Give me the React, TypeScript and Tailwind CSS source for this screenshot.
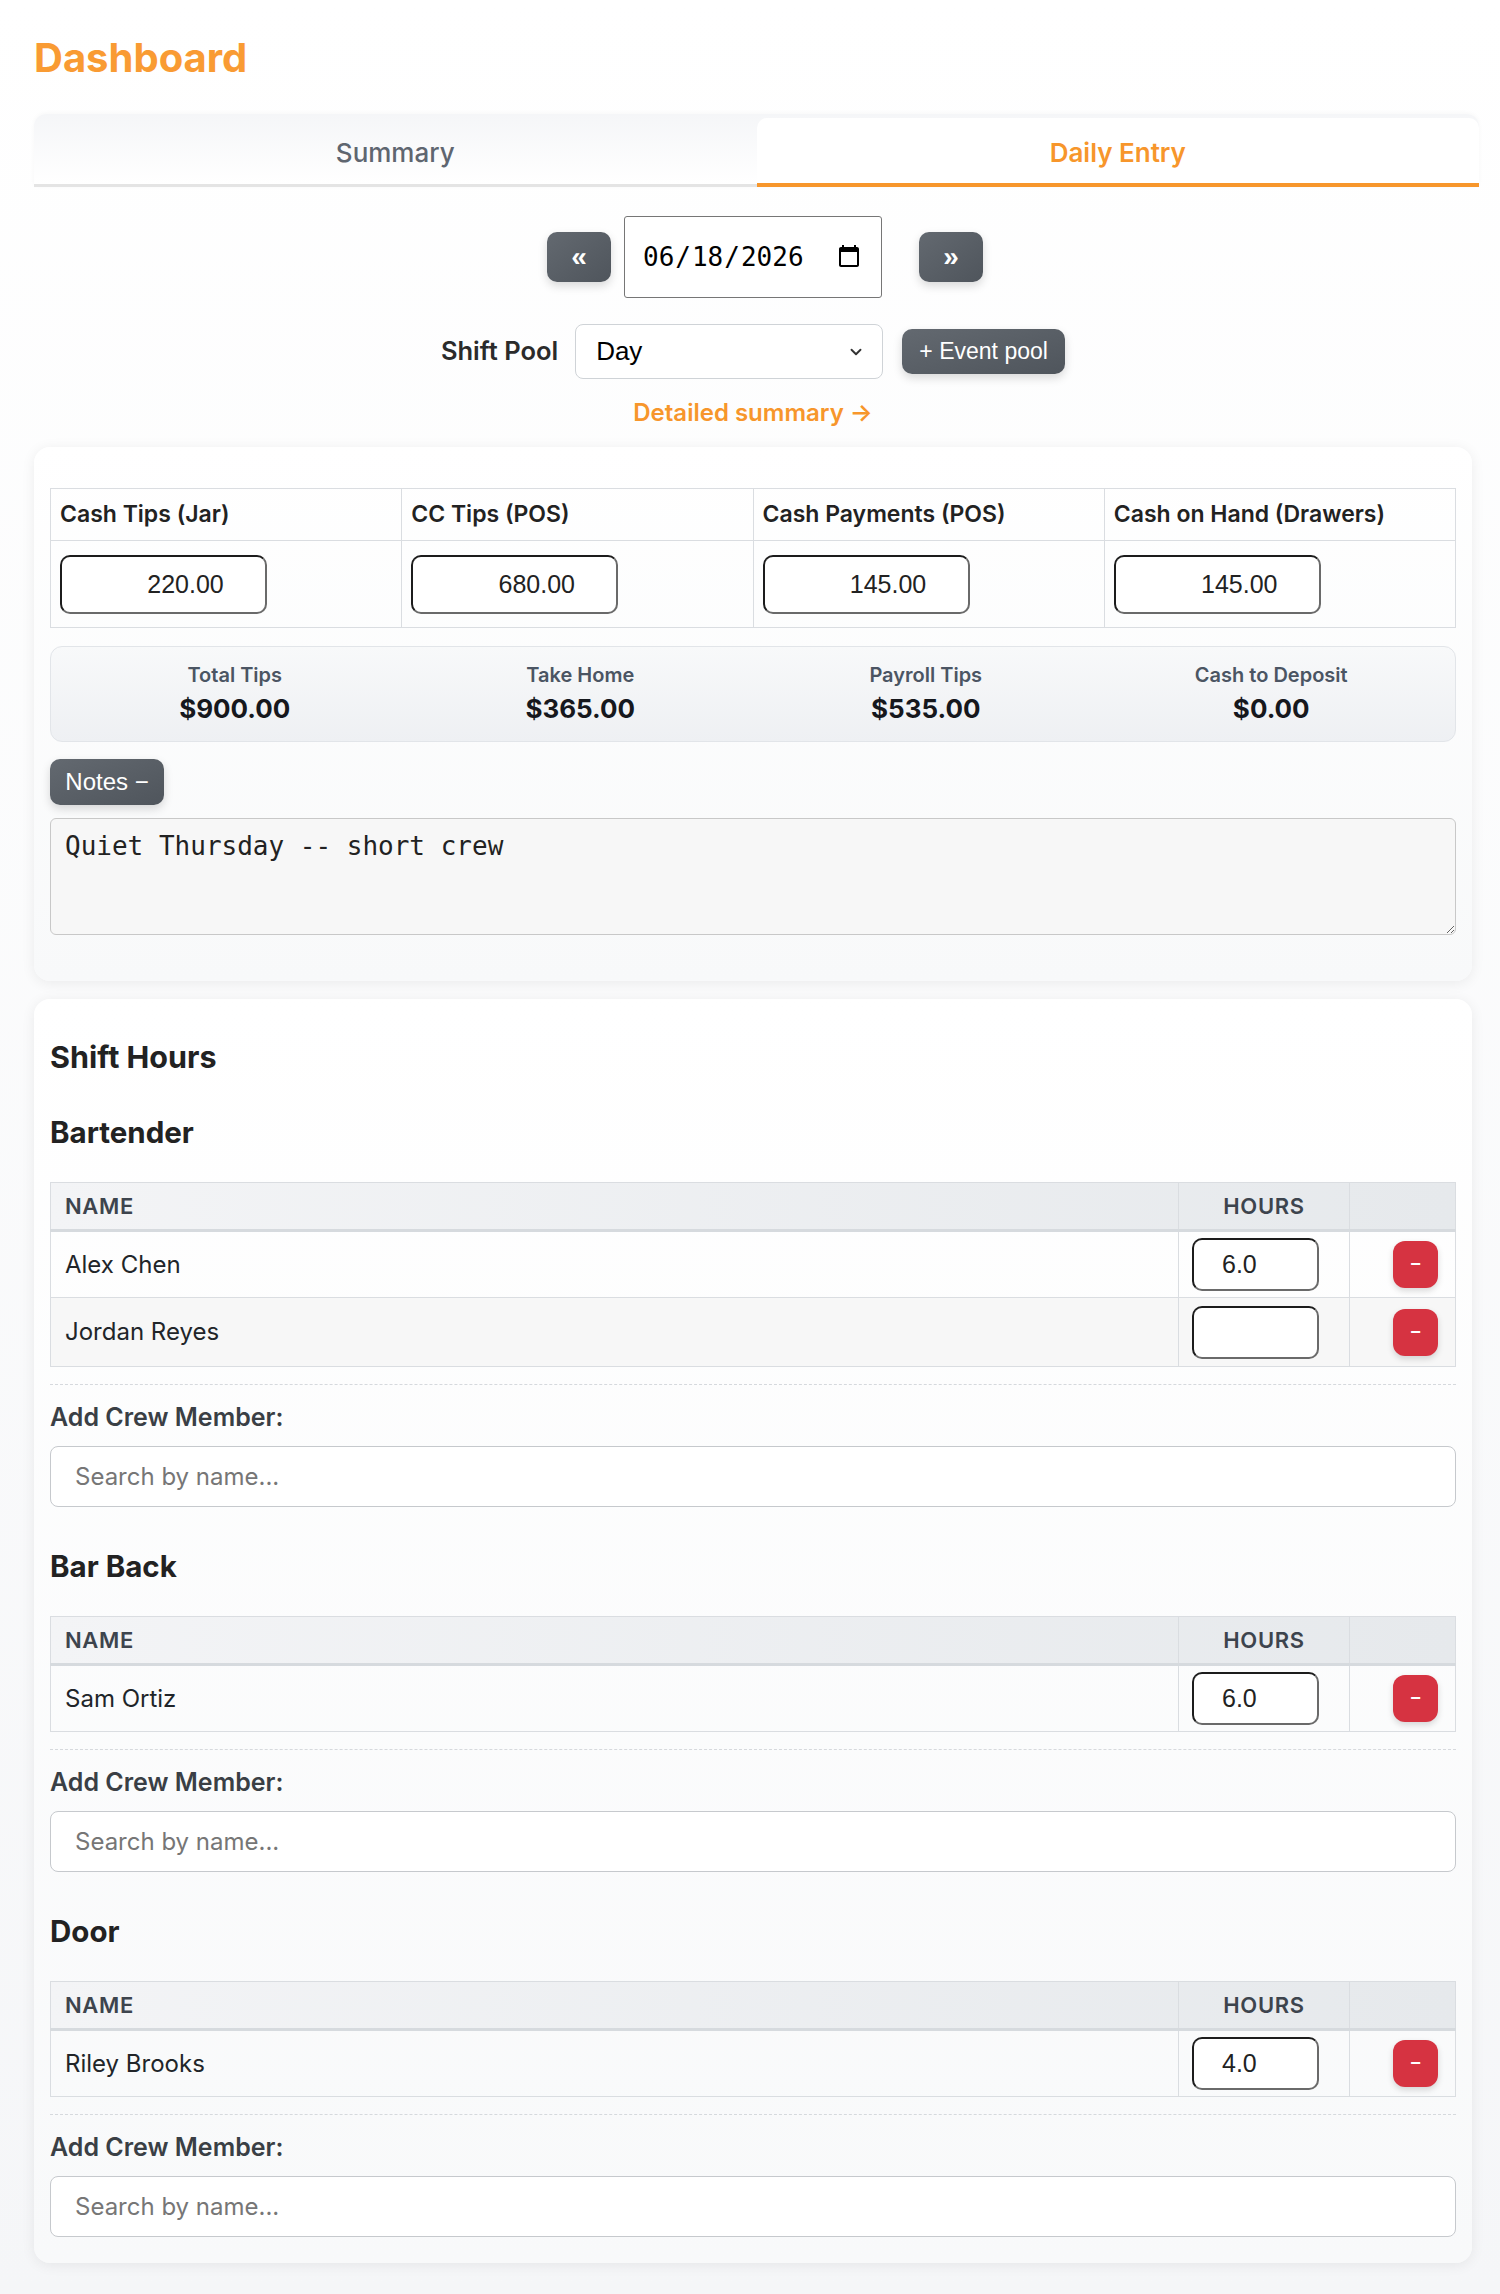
import React from 'react';
import { ChevronDown } from 'lucide-react';

type Crew = { name: string; hours: string };

const roles: { title: string; crew: Crew[] }[] = [
  { title: 'Bartender', crew: [{ name: 'Alex Chen', hours: '6.0' }, { name: 'Jordan Reyes', hours: '' }] },
  { title: 'Bar Back', crew: [{ name: 'Sam Ortiz', hours: '6.0' }] },
  { title: 'Door', crew: [{ name: 'Riley Brooks', hours: '4.0' }] },
];

const entries = [
  { label: 'Cash Tips (Jar)', value: '220.00' },
  { label: 'CC Tips (POS)', value: '680.00' },
  { label: 'Cash Payments (POS)', value: '145.00' },
  { label: 'Cash on Hand (Drawers)', value: '145.00' },
];

const totals = [
  { label: 'Total Tips', value: '$900.00' },
  { label: 'Take Home', value: '$365.00' },
  { label: 'Payroll Tips', value: '$535.00' },
  { label: 'Cash to Deposit', value: '$0.00' },
];

function RoleSection({ title, crew, first }: { title: string; crew: Crew[]; first?: boolean }) {
  return (
    <section className={first ? 'mt-[40px]' : 'mt-[42px]'}>
      <h3 className="text-[29.5px] leading-[34px] font-bold text-[#222]">{title}</h3>

      <table className="mt-[33px] w-full table-fixed border-collapse border border-[#dadde1]">
        <colgroup>
          <col />
          <col className="w-[171px]" />
          <col className="w-[106px]" />
        </colgroup>
        <thead>
          <tr className="bg-gradient-to-r from-[#f3f4f6] to-[#e6e9ec]">
            <th className="h-[48px] border border-b-[3px] border-[#dadde1] border-b-[#d6dade] pl-[14px] text-left text-[22px] font-semibold uppercase tracking-[0.03em] text-[#3d444d]">
              Name
            </th>
            <th className="border border-b-[3px] border-[#dadde1] border-b-[#d6dade] text-center text-[22px] font-semibold uppercase tracking-[0.03em] text-[#3d444d]">
              Hours
            </th>
            <th className="border border-b-[3px] border-[#dadde1] border-b-[#d6dade]" />
          </tr>
        </thead>
        <tbody>
          {crew.map((c, i) => (
            <tr key={c.name} className={i % 2 === 1 ? 'bg-[#f7f7f7]' : ''}>
              <td className={`${i === 1 ? 'h-[69px]' : 'h-[67px]'} border border-[#dadde1] pl-[14px] text-[24px] text-[#212529]`}>
                {c.name}
              </td>
              <td className="border border-[#dadde1] pl-[13px]">
                <input
                  type="text"
                  defaultValue={c.hours}
                  className="block h-[53px] w-[127px] rounded-[10px] border-2 border-t-[#1c1c1c] border-l-[#1c1c1c] border-b-[#6a6a6a] border-r-[#6a6a6a] bg-white pl-[28px] font-['Liberation_Sans',Arial,sans-serif] text-[25px] text-[#222] outline-none"
                />
              </td>
              <td className="border border-[#dadde1] pr-[17px]">
                <div className="flex justify-end">
                  <button className="flex h-[47px] w-[45px] items-center justify-center rounded-[12px] bg-[#d63341] font-['Liberation_Sans',Arial,sans-serif] text-[18px] font-bold text-white shadow-[0_3px_6px_rgba(0,0,0,0.15)]">
                    −
                  </button>
                </div>
              </td>
            </tr>
          ))}
        </tbody>
      </table>

      <div className="mt-[17px] border-t border-dashed border-[#d6d9dd]" />
      <p className="mt-[18px] text-[25px] leading-[29px] font-semibold text-[#3a3f45]">Add Crew Member:</p>
      <input
        type="text"
        placeholder="Search by name..."
        className="mt-[14px] block h-[61px] w-full rounded-[8px] border-[1.5px] border-[#c6c9cd] bg-white pl-[24px] text-[24px] text-[#222] placeholder:text-[#767676] outline-none"
      />
    </section>
  );
}

export default function App() {
  return (
    <div className="min-h-screen bg-gradient-to-b from-white to-[#f5f6f8] pt-[34px] pb-[32px] pl-[34px] pr-[28px] font-['Inter',sans-serif] text-[#212529]">
      <h1 className="text-[40px] leading-[48px] font-bold text-[#f99b33]">Dashboard</h1>

      {/* Tabs */}
      <div className="-mr-[7px] mt-[32px] flex h-[73px] rounded-t-[12px] border-b-[3px] border-[#e4e4e4] bg-gradient-to-b from-[#f5f6f8] to-white shadow-[0_-1px_4px_rgba(0,0,0,0.03)]">
        <button className="flex flex-1 items-center justify-center pt-[6px] text-[26px] font-medium text-[#5f6670]">Summary</button>
        <button className="mt-[4px] flex h-[69px] flex-1 items-center justify-center self-start rounded-t-[10px] border-b-[4px] border-[#f7962b] bg-white pt-[3px] text-[26px] font-semibold text-[#f7962b]">
          Daily Entry
        </button>
      </div>

      {/* Date nav */}
      <div className="mt-[29px] flex items-center justify-center pl-[24px]">
        <button className="mr-[13px] flex h-[50px] w-[64px] items-center justify-center rounded-[10px] bg-gradient-to-br from-[#636970] to-[#4f555c] font-['Liberation_Sans',Arial,sans-serif] text-[28px] font-bold text-white shadow-[0_4px_10px_rgba(0,0,0,0.15)]">
          «
        </button>
        <input
          type="date"
          defaultValue="2026-06-18"
          className="h-[82px] w-[258px] rounded-[3px] border border-[#767676] bg-white px-[17px] font-['DejaVu_Sans_Mono',monospace] text-[26px] text-black outline-none"
        />
        <button className="ml-[37px] flex h-[50px] w-[64px] items-center justify-center rounded-[10px] bg-gradient-to-br from-[#636970] to-[#4f555c] font-['Liberation_Sans',Arial,sans-serif] text-[28px] font-bold text-white shadow-[0_4px_10px_rgba(0,0,0,0.15)]">
          »
        </button>
      </div>

      {/* Shift pool */}
      <div className="mt-[26px] flex items-center justify-center">
        <span className="mr-[17px] text-[25.5px] font-semibold text-[#2b2b2b]">Shift Pool</span>
        <div className="relative h-[55px] w-[308px]">
          <select
            defaultValue="Day"
            className="h-full w-full appearance-none rounded-[8px] border border-[#cfd3d7] bg-white pl-[20px] font-['Liberation_Sans',Arial,sans-serif] text-[26px] text-black outline-none"
          >
            <option>Day</option>
            <option>Night</option>
          </select>
          <ChevronDown className="pointer-events-none absolute right-[18px] top-[19px] h-[18px] w-[18px] text-[#333]" strokeWidth={2.5} />
        </div>
        <button className="ml-[19px] h-[45px] w-[163px] rounded-[10px] bg-gradient-to-br from-[#636970] to-[#4f555c] font-['Liberation_Sans',Arial,sans-serif] text-[23px] text-white shadow-[0_4px_10px_rgba(0,0,0,0.15)]">
          + Event pool
        </button>
      </div>

      <div className="mt-[19px] text-center">
        <a className="text-[24px] leading-[29px] font-semibold text-[#f7962b]">Detailed summary →</a>
      </div>

      {/* Entry card */}
      <div className="mt-[20px] rounded-[16px] bg-gradient-to-b from-white to-[#f8f9fa] px-[16px] pt-[41px] pb-[46px] shadow-[0_2px_14px_rgba(0,0,0,0.07)]">
        <table className="w-full table-fixed border-collapse border border-[#dadde1]">
          <thead>
            <tr>
              {entries.map(e => (
                <th key={e.label} className="h-[52px] border border-[#dadde1] px-[9px] text-left text-[23px] font-semibold text-[#222]">
                  {e.label}
                </th>
              ))}
            </tr>
          </thead>
          <tbody>
            <tr>
              {entries.map(e => (
                <td key={e.label} className="h-[87px] border border-[#dadde1] px-[9px]">
                  <input
                    type="text"
                    defaultValue={e.value}
                    className="block h-[59px] w-[207px] rounded-[10px] border-2 border-t-[#1c1c1c] border-l-[#1c1c1c] border-b-[#6a6a6a] border-r-[#6a6a6a] bg-white pl-[44px] text-center font-['Liberation_Sans',Arial,sans-serif] text-[25px] text-[#222] outline-none"
                  />
                </td>
              ))}
            </tr>
          </tbody>
        </table>

        <div className="mt-[18px] grid h-[96px] grid-cols-4 items-center rounded-[12px] border border-[#e2e5e9] bg-gradient-to-b from-[#f8f9fa] to-[#eef0f3] px-[11px]">
          {totals.map(t => (
            <div key={t.label} className="flex flex-col items-center">
              <span className="text-[20px] leading-[24px] font-semibold text-[#4b5563]">{t.label}</span>
              <span className="mt-[5px] text-[26px] leading-[34px] font-bold text-[#16181d]">{t.value}</span>
            </div>
          ))}
        </div>

        <button className="mt-[17px] block h-[46px] w-[114px] rounded-[10px] bg-gradient-to-br from-[#636970] to-[#4f555c] font-['Liberation_Sans',Arial,sans-serif] text-[24px] text-white shadow-[0_4px_10px_rgba(0,0,0,0.15)]">
          Notes −
        </button>
        <textarea
          defaultValue="Quiet Thursday -- short crew"
          className="mt-[13px] block h-[117px] w-full rounded-[6px] border border-[#c8c8c8] bg-[#f7f7f7] px-[14px] pt-[11px] font-['DejaVu_Sans_Mono',monospace] text-[26px] leading-[32px] text-[#222] outline-none"
        />
      </div>

      {/* Shift hours card */}
      <div className="mt-[18px] rounded-[16px] bg-gradient-to-b from-white to-[#f8f9fa] px-[16px] pt-[40px] pb-[26px] shadow-[0_2px_14px_rgba(0,0,0,0.07)]">
        <h2 className="text-[30.5px] leading-[36px] font-bold text-[#222]">Shift Hours</h2>
        {roles.map((r, i) => (
          <RoleSection key={r.title} title={r.title} crew={r.crew} first={i === 0} />
        ))}
      </div>
    </div>
  );
}
